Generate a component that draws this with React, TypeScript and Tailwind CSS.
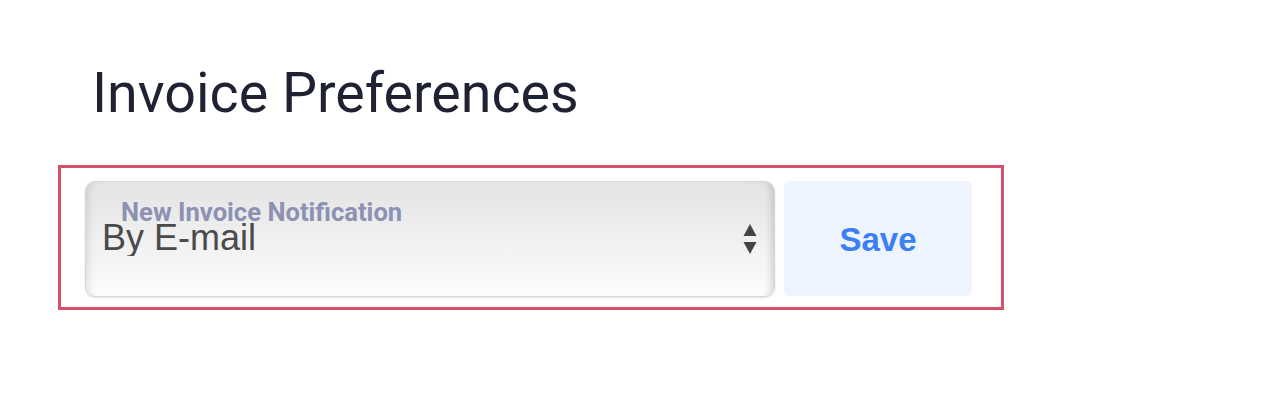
import { useState } from "react";

/* ---------------- OPTIONS ---------------- */
const notificationOptions = ["By E-mail", "By SMS", "Never"];

/* ---------------- MAIN COMPONENT ---------------- */
export default function App() {
  const [choice, setChoice] = useState(notificationOptions[0]);

  return (
    <div className="min-h-screen bg-white pt-[66px] pl-[58px] font-['Roboto',sans-serif]">
      {/* Title */}
      <h1 className="ml-[34px] text-[55.6px] leading-[55px] font-normal text-[#1f2232]">
        Invoice Preferences
      </h1>

      {/* Highlighted form row */}
      <div className="mt-[44px] w-[946px] border-[3px] border-[#d64f6b] pl-[24px] pr-[28px] pt-[13px] pb-[10px] flex gap-[9px]">
        {/* Select */}
        <div className="relative w-[690px] h-[116px] rounded-[10px] border border-[#d6d6d6] bg-gradient-to-b from-[#e4e4e4] via-[#f0f0f0] to-[#fdfdfd] shadow-[inset_10px_0_8px_-8px_rgba(0,0,0,0.12),inset_-10px_0_8px_-8px_rgba(0,0,0,0.18),0_1px_2px_rgba(0,0,0,0.12)]">
          <select
            value={choice}
            onChange={(e) => setChoice(e.target.value)}
            className="appearance-none block w-full h-full bg-transparent outline-none pl-[16px] pt-[38px] pb-[40px] text-[36px] leading-[36px] text-[#4a4a4a] font-['Liberation_Sans',sans-serif]"
          >
            {notificationOptions.map((o) => (
              <option key={o}>{o}</option>
            ))}
          </select>
          <span className="absolute left-[35px] top-[18px] text-[25.6px] leading-none font-bold text-[#8d91b3] pointer-events-none">
            New Invoice Notification
          </span>
          {/* Up / down arrows */}
          <svg
            className="absolute left-[657px] top-[41px] pointer-events-none"
            width="14"
            height="32"
            viewBox="0 0 14 32"
          >
            <path d="M7 1 L13.5 13 L0.5 13 Z" fill="#444" />
            <path d="M0.5 19 L13.5 19 L7 31 Z" fill="#444" />
          </svg>
        </div>

        {/* Save button */}
        <button className="w-[188px] h-[115px] pt-[3px] rounded-[6px] bg-[#eef4fd] text-[33px] font-bold text-[#3b7ff2] font-['Liberation_Sans',sans-serif]">
          Save
        </button>
      </div>
    </div>
  );
}
